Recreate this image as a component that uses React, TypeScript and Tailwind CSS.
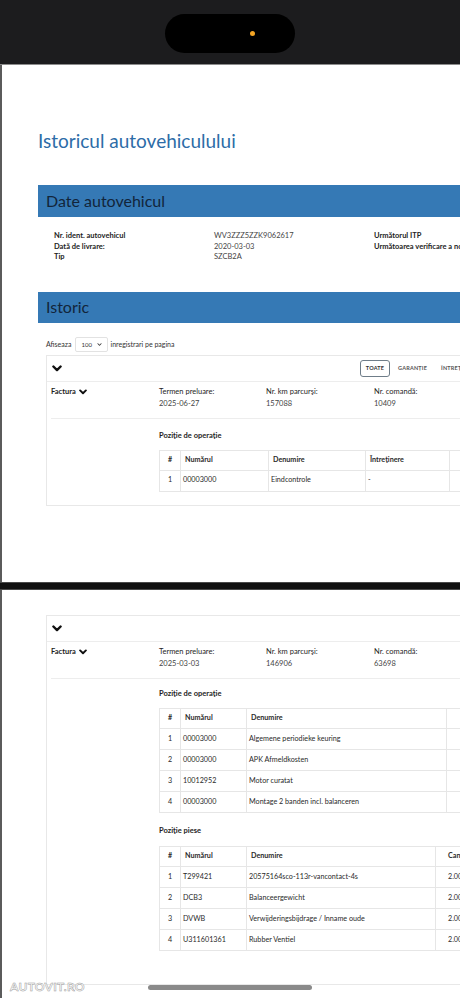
import { FaChevronDown } from "react-icons/fa";

interface OpTableProps {
  cols: number[];
  head: string[];
  rows: string[][];
  lastAlign?: "center" | "left";
}

// heavy chevron used for the collapsible rows
const Chevron: React.FC<{ className?: string }> = ({ className }) => (
  <svg viewBox="0 0 10 7" className={className} fill="none" stroke="currentColor" strokeWidth="2.4" strokeLinecap="round" strokeLinejoin="round">
    <path d="M1.4 1.5 L5 5.1 L8.6 1.5" />
  </svg>
);

// generic bordered table used for operations and parts
const OpTable: React.FC<OpTableProps> = ({ cols, head, rows, lastAlign = "left" }) => {
  const last = cols.length - 1;
  return (
    <table className="table-fixed border-collapse text-[7.2px] text-[#2a2a2a]">
      <colgroup>
        {cols.map((w, i) => (
          <col key={i} style={{ width: w }} />
        ))}
      </colgroup>
      <thead>
        <tr className="h-[20px]">
          {head.map((h, i) => (
            <th
              key={i}
              className={
                i === 0
                  ? "border border-[#e6e6e6] text-center font-bold"
                  : i === last && lastAlign === "center"
                  ? "border border-[#e6e6e6] text-center font-bold"
                  : i === last
                  ? "border border-[#e6e6e6] pl-[12px] text-left font-bold"
                  : "border border-[#e6e6e6] pl-[4px] text-left font-bold"
              }
            >
              {h}
            </th>
          ))}
        </tr>
      </thead>
      <tbody>
        {rows.map((r, ri) => (
          <tr key={ri} className="h-[21px]">
            {r.map((c, i) => (
              <td
                key={i}
                className={
                  i === 0
                    ? "border border-[#e6e6e6] text-center"
                    : i === last && lastAlign === "center"
                    ? "border border-[#e6e6e6] text-center"
                    : i === last
                    ? "border border-[#e6e6e6] pl-[12px]"
                    : "border border-[#e6e6e6] pl-[2px]"
                }
              >
                {c}
              </td>
            ))}
          </tr>
        ))}
      </tbody>
    </table>
  );
};

interface InvoiceProps {
  date: string;
  km: string;
  order: string;
}

const InvoiceRow: React.FC<InvoiceProps> = ({ date, km, order }) => (
  <div className="grid h-[36px] grid-cols-[108px_107px_108px_107px] px-[4px] pt-[4px] text-[7.5px] leading-[12px] text-[#222]">
    <div className="flex items-start gap-[3px] font-bold">
      Factura <Chevron className="mt-[3px] h-[6px] w-[8px] text-[#111]" />
    </div>
    <div>
      <div className="text-[#1e1e1e]">Termen preluare:</div>
      <div className="text-[#444]">{date}</div>
    </div>
    <div>
      <div className="text-[#1e1e1e]">Nr. km parcurşi:</div>
      <div className="text-[#444]">{km}</div>
    </div>
    <div>
      <div className="text-[#1e1e1e]">Nr. comandă:</div>
      <div className="text-[#444]">{order}</div>
    </div>
  </div>
);

const SectionTitle: React.FC<{ children: React.ReactNode }> = ({ children }) => (
  <div className="text-[7.5px] font-bold leading-[10px] text-[#1e1e1e]">{children}</div>
);

export default function App() {
  return (
    <div className="relative h-[999px] w-[460px] overflow-hidden bg-white font-['Lato','Liberation_Sans',sans-serif]">
      {/* status bar with the camera island */}
      <div className="flex h-[64px] justify-center bg-[#1c1c1e] pt-[14px]">
        <div className="flex h-[39px] w-[130px] items-center justify-end rounded-full bg-black pr-[40px]">
          <span className="h-[5px] w-[5px] rounded-full bg-[#f5a524]" />
        </div>
      </div>
      <div className="h-px bg-[#8c8c8c]" />

      {/* first page */}
      <section className="h-[517px] overflow-hidden border-l-2 border-[#5b5b5b]">
        <div className="w-[640px] pl-[36px] pt-[64px]">
          <h1 className="text-[19px] font-normal leading-[24px] text-[#2d6ca7]">Istoricul autovehiculului</h1>

          <div className="mt-[32px] flex h-[32px] items-center bg-[#3579b5] pl-[8px] text-[16px] text-[#12253a]">
            Date autovehicul
          </div>

          <div className="mt-[14px] grid grid-cols-[160px_160px_160px] pl-[16px] text-[7.5px] leading-[10.5px] text-[#222]">
            <div className="font-bold">Nr. ident. autovehicul</div>
            <div className="text-[#444]">WV3ZZZ5ZZK9062617</div>
            <div className="font-bold">Următorul ITP</div>
            <div className="font-bold">Dată de livrare:</div>
            <div className="text-[#444]">2020-03-03</div>
            <div className="font-bold">Următoarea verificare a noxelor</div>
            <div className="font-bold">Tip</div>
            <div className="text-[#444]">SZCB2A</div>
            <div />
          </div>

          <div className="mt-[29px] flex h-[31px] items-center bg-[#3579b5] pl-[8px] text-[16px] text-[#12253a]">
            Istoric
          </div>

          <div className="mt-[14px] flex items-center pl-[8px] text-[7px] text-[#333]">
            <span>Afiseaza</span>
            <div className="ml-[4px] flex h-[15px] w-[33px] items-center justify-between rounded-[2px] border border-[#e2e2e2] px-[5px] text-[6px]">
              <span>100</span>
              <FaChevronDown className="h-[5px] w-[5px]" />
            </div>
            <span className="ml-[2px]">inregistrari pe pagina</span>
          </div>

          <div className="ml-[8px] mt-[3px] border border-[#e8e8e8]">
            <div className="flex h-[25px] items-center pl-[5px]">
              <Chevron className="h-[7px] w-[10px] text-[#111]" />
              <div className="ml-[298px] flex items-center text-[5.5px] font-bold tracking-[0.2px]">
                <div className="flex h-[17px] w-[30px] items-center justify-center rounded-[3px] border border-[#6f7d89] text-[#333]">
                  TOATE
                </div>
                <span className="ml-[8px] text-[#555]">GARANȚIE</span>
                <span className="ml-[14px] text-[#555]">ÎNTREȚINERE</span>
              </div>
            </div>
            <div className="border-t border-[#ededed]" />
            <InvoiceRow date="2025-06-27" km="157088" order="10409" />
            <div className="mx-[4px] border-t border-[#ededed]" />
            <div className="pb-[13px] pl-[112px] pt-[12px]">
              <SectionTitle>Poziţie de operaţie</SectionTitle>
              <div className="mt-[9px]">
                <OpTable
                  cols={[21, 88, 97, 84, 120]}
                  head={["#", "Numărul", "Denumire", "Întreţinere", ""]}
                  rows={[["1", "00003000", "Eindcontrole", "-", ""]]}
                  lastAlign="left"
                />
              </div>
            </div>
          </div>
        </div>
      </section>

      {/* gap between the two captures */}
      <div className="h-[8px] border-y border-[#4a4a4a] bg-[#111]" />

      {/* second page */}
      <section className="h-[408px] overflow-hidden border-l-2 border-[#5b5b5b]">
        <div className="w-[640px] pl-[44px] pt-[25px]">
          <div className="h-[370px] border border-[#e8e8e8]">
            <div className="flex h-[25px] items-center pl-[5px]">
              <Chevron className="h-[7px] w-[10px] text-[#111]" />
            </div>
            <div className="border-t border-[#ededed]" />
            <InvoiceRow date="2025-03-03" km="146906" order="63698" />
            <div className="mx-[4px] border-t border-[#ededed]" />
            <div className="pl-[112px] pt-[10px]">
              <SectionTitle>Poziţie de operaţie</SectionTitle>
              <div className="mt-[9px]">
                <OpTable
                  cols={[21, 66, 200, 140]}
                  head={["#", "Numărul", "Denumire", ""]}
                  rows={[
                    ["1", "00003000", "Algemene periodieke keuring", ""],
                    ["2", "00003000", "APK Afmeldkosten", ""],
                    ["3", "10012952", "Motor curatat", ""],
                    ["4", "00003000", "Montage 2 banden incl. balanceren", ""],
                  ]}
                />
              </div>
              <div className="mt-[13px]">
                <SectionTitle>Poziţie piese</SectionTitle>
              </div>
              <div className="mt-[10px]">
                <OpTable
                  cols={[21, 66, 189, 150]}
                  head={["#", "Numărul", "Denumire", "Cantitate"]}
                  rows={[
                    ["1", "T299421", "20575164sco-113r-vancontact-4s", "2.00"],
                    ["2", "DCB3", "Balanceergewicht", "2.00"],
                    ["3", "DVWB", "Verwijderingsbijdrage / Inname oude", "2.00"],
                    ["4", "U311601361", "Rubber Ventiel", "2.00"],
                  ]}
                />
              </div>
            </div>
          </div>
        </div>
      </section>

      {/* horizontal scroll indicator */}
      <div className="absolute left-[148px] top-[985px] h-[5px] w-[164px] rounded-full bg-[#8a8a8a]" />
      {/* watermark */}
      <div className="absolute left-[10px] top-[978px] text-[12px] font-bold tracking-[0.3px] text-white [-webkit-text-stroke:0.5px_#9a9a9a]">
        AUTOVIT.RO
      </div>
    </div>
  );
}
